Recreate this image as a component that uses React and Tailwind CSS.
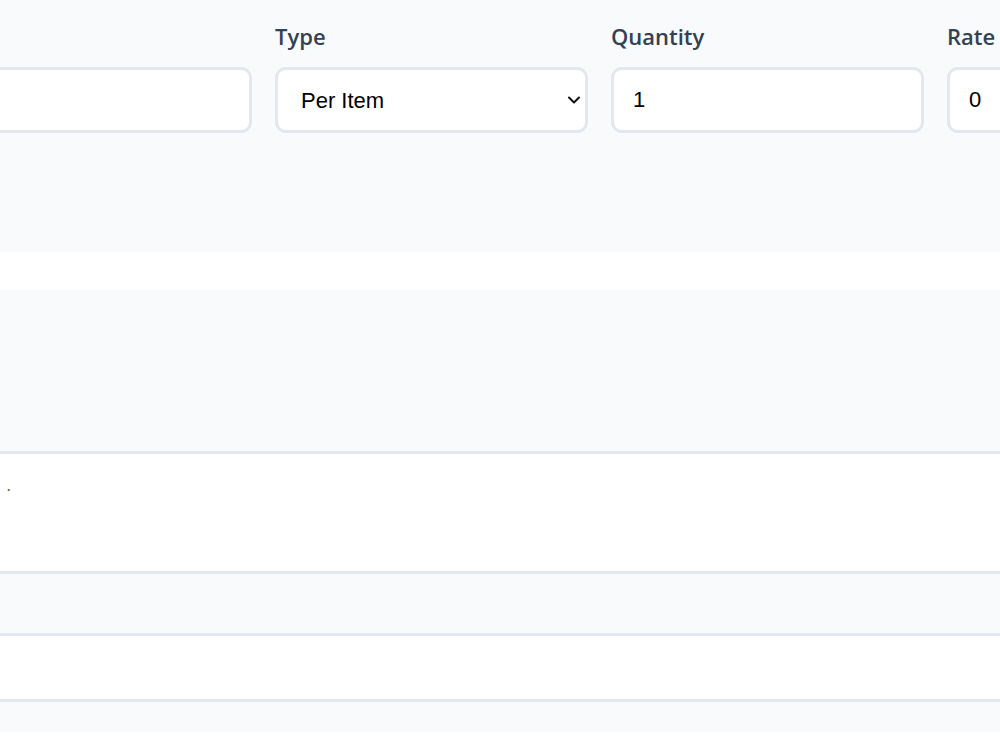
const fields = [
  { label: "\u00a0", value: "" },
  { label: "Type", value: "Per Item", select: true },
  { label: "Quantity", value: "1" },
  { label: "Rate", value: "0" },
];

const ChevronDown = () => (
  <svg width="14" height="14" viewBox="0 0 14 14" fill="none" className="pointer-events-none absolute right-[7px] top-1/2 -translate-y-1/2">
    <path d="M2 4.5 L7 9.5 L12 4.5" stroke="#111" strokeWidth="2" strokeLinecap="round" strokeLinejoin="round" />
  </svg>
);

const App = () => {
  return (
    <div className="w-[1000px] h-[750px] overflow-hidden bg-white font-['Open_Sans',sans-serif]">
      {/* Line item fields */}
      <div className="h-[252px] bg-[#f8fafc] pt-[22px]">
        <div className="flex gap-[23px] -ml-[61px]">
          {fields.map((f, i) => (
            <div key={i} className="w-[313px] shrink-0 flex flex-col">
              <label className="text-[22px] leading-[28px] font-semibold text-[#334155] mb-[17px]">{f.label}</label>
              {f.select ? (
                <div className="relative">
                  <select
                    defaultValue={f.value}
                    className="appearance-none w-full h-[66px] bg-white border-[3px] border-[#e2e8f0] rounded-[11px] pl-[23px] text-[22px] text-black font-['Liberation_Sans',Arial,sans-serif] outline-none"
                  >
                    <option>Per Item</option>
                    <option>Per Hour</option>
                  </select>
                  <ChevronDown />
                </div>
              ) : (
                <input
                  type="text"
                  defaultValue={f.value}
                  className="w-full h-[66px] bg-white border-[3px] border-[#e2e8f0] rounded-[11px] px-[19px] text-[22px] text-black font-['Liberation_Sans',Arial,sans-serif] outline-none"
                />
              )}
            </div>
          ))}
        </div>
      </div>

      <div className="h-[38px] bg-white" />

      {/* Table */}
      <div className="h-[161px] bg-[#f8fafc]" />
      <div className="h-[120px] bg-white border-t-[3px] border-[#e2e8f0] pt-[27px] pl-[7px]">
        <span className="block text-[12px] leading-[12px] font-bold text-[#7a5a3a]">.</span>
      </div>
      <div className="h-[62px] bg-[#f8fafc] border-t-[3px] border-[#e2e8f0]" />
      <div className="h-[66px] bg-white border-t-[3px] border-[#e2e8f0]" />
      <div className="h-[33px] bg-[#f8fafc] border-t-[3px] border-[#e2e8f0]" />
      <div className="h-[18px] bg-white" />
    </div>
  );
};

export default App;
